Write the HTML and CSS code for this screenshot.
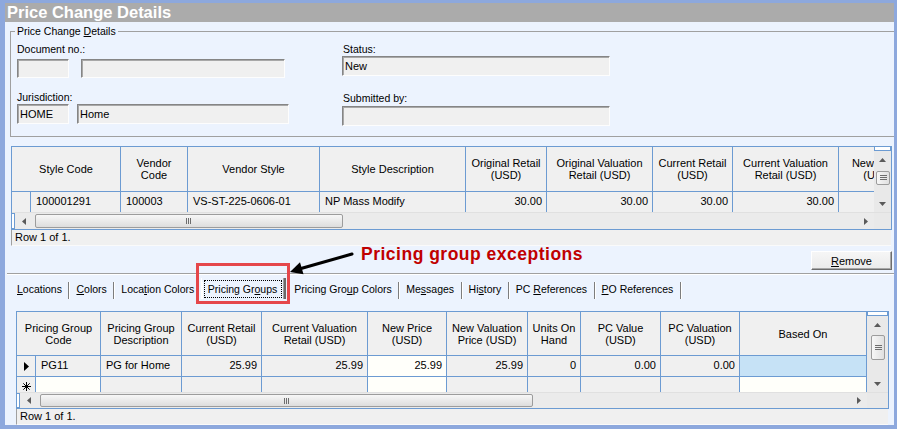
FILE: index.html
```html
<!DOCTYPE html>
<html>
<head>
<meta charset="utf-8">
<title>Price Change Details</title>
<link rel="stylesheet" href="styles.css">
</head>
<body>
<div class="window">
  <div class="titlebar">Price Change Details</div>
  <div class="panel">
    <fieldset class="group">
      <legend>Price Change <u>D</u>etails</legend>
      <div class="form">
        <div class="col-left">
          <div class="label lbl-first">Document no.:</div>
          <div class="inputs gap12 in-doc">
            <div class="field w52"></div>
            <div class="field w204"></div>
          </div>
          <div class="label lbl-jur">Jurisdiction:</div>
          <div class="inputs gap8 in-jur">
            <div class="field w52 h20">HOME</div>
            <div class="field w212 h20">Home</div>
          </div>
        </div>
        <div class="col-right">
          <div class="label lbl-first">Status:</div>
          <div class="field w267 h20">New</div>
          <div class="label lbl-sub">Submitted by:</div>
          <div class="field w267 h20 in-sub"></div>
        </div>
      </div>
    </fieldset>

    <div class="grid g1">
      <div class="grid-body">
        <div class="grid-view">
          <div class="row hdr">
            <div class="cell hcell span2">Style Code</div>
            <div class="cell hcell">Vendor Code</div>
            <div class="cell hcell">Vendor Style</div>
            <div class="cell hcell">Style Description</div>
            <div class="cell hcell">Original Retail (USD)</div>
            <div class="cell hcell">Original Valuation Retail (USD)</div>
            <div class="cell hcell">Current Retail (USD)</div>
            <div class="cell hcell">Current Valuation Retail (USD)</div>
            <div class="cell hcell">New Retail (USD)</div>
          </div>
          <div class="row data">
            <div class="cell rh"></div>
            <div class="cell">100001291</div>
            <div class="cell">100003</div>
            <div class="cell">VS-ST-225-0606-01</div>
            <div class="cell">NP Mass Modify</div>
            <div class="cell num">30.00</div>
            <div class="cell num">30.00</div>
            <div class="cell num">30.00</div>
            <div class="cell num">30.00</div>
            <div class="cell num"></div>
          </div>
        </div>
        <div class="vscroll">
          <div class="vcap"></div>
          <div class="sbtn"><svg width="7" height="4" viewBox="0 0 7 4"><path d="M0 4L3.5 0L7 4Z"/></svg></div>
          <div class="vtrack">
            <div class="vthumb"><svg width="7" height="6" viewBox="0 0 7 6"><path d="M0 0.5H7M0 2.5H7M0 4.5H7" stroke="#6d6d6d" stroke-width="1"/></svg></div>
          </div>
          <div class="sbtn"><svg width="7" height="4" viewBox="0 0 7 4"><path d="M0 0L7 0L3.5 4Z"/></svg></div>
        </div>
      </div>
      <div class="hscroll">
        <div class="hcap"></div>
        <div class="sbtn hbtn"><svg width="4" height="7" viewBox="0 0 4 7"><path d="M4 0L0 3.5L4 7Z"/></svg></div>
        <div class="htrack">
          <div class="hthumb"><svg width="6" height="6" viewBox="0 0 6 6"><path d="M0.5 0V6M2.5 0V6M4.5 0V6" stroke="#6d6d6d" stroke-width="1"/></svg></div>
        </div>
        <div class="sbtn hbtn"><svg width="4" height="7" viewBox="0 0 4 7"><path d="M0 0L4 3.5L0 7Z"/></svg></div>
        <div class="corner"></div>
      </div>
    </div>
    <div class="status s1">Row 1 of 1.</div>

    <div class="actions"><button class="btn"><u>R</u>emove</button></div>

    <div class="tabstrip">
      <div class="tab first"><u>L</u>ocations</div>
      <div class="tab"><u>C</u>olors</div>
      <div class="tab">Loca<u>t</u>ion Colors</div>
      <div class="tab active"><span class="focus">Pricing Gr<u>o</u>ups</span></div>
      <div class="tab">Pricing Gro<u>u</u>p Colors</div>
      <div class="tab">Me<u>s</u>sages</div>
      <div class="tab">Hi<u>s</u>tory</div>
      <div class="tab">PC <u>R</u>eferences</div>
      <div class="tab"><u>P</u>O References</div>
    </div>

    <div class="tabpage">
      <div class="grid g2">
        <div class="grid-body">
          <div class="grid-view">
            <div class="row hdr">
              <div class="cell hcell span2">Pricing Group Code</div>
              <div class="cell hcell">Pricing Group Description</div>
              <div class="cell hcell">Current Retail (USD)</div>
              <div class="cell hcell">Current Valuation Retail (USD)</div>
              <div class="cell hcell">New Price (USD)</div>
              <div class="cell hcell">New Valuation Price (USD)</div>
              <div class="cell hcell">Units On Hand</div>
              <div class="cell hcell">PC Value (USD)</div>
              <div class="cell hcell">PC Valuation (USD)</div>
              <div class="cell hcell">Based On</div>
            </div>
            <div class="row data">
              <div class="cell rh"><svg width="5" height="9" viewBox="0 0 5 9"><path d="M0 0L5 4.5L0 9Z"/></svg></div>
              <div class="cell">PG11</div>
              <div class="cell">PG for Home</div>
              <div class="cell num">25.99</div>
              <div class="cell num">25.99</div>
              <div class="cell num edit">25.99</div>
              <div class="cell num">25.99</div>
              <div class="cell num">0</div>
              <div class="cell num">0.00</div>
              <div class="cell num">0.00</div>
              <div class="cell sel"></div>
            </div>
            <div class="row newrow">
              <div class="cell rh star"><svg width="9" height="9" viewBox="0 0 9 9"><path d="M4.5 0V9M0 4.5H9M1.3 1.3L7.7 7.7M7.7 1.3L1.3 7.7" stroke="#000" stroke-width="1"/></svg></div>
              <div class="cell edit"></div>
              <div class="cell"></div>
              <div class="cell"></div>
              <div class="cell"></div>
              <div class="cell edit"></div>
              <div class="cell"></div>
              <div class="cell"></div>
              <div class="cell"></div>
              <div class="cell"></div>
              <div class="cell edit"></div>
            </div>
          </div>
          <div class="vscroll">
            <div class="vcap"></div>
            <div class="sbtn"><svg width="7" height="4" viewBox="0 0 7 4"><path d="M0 4L3.5 0L7 4Z"/></svg></div>
            <div class="vtrack">
              <div class="vthumb"><svg width="7" height="6" viewBox="0 0 7 6"><path d="M0 0.5H7M0 2.5H7M0 4.5H7" stroke="#6d6d6d" stroke-width="1"/></svg></div>
            </div>
            <div class="sbtn"><svg width="7" height="4" viewBox="0 0 7 4"><path d="M0 0L7 0L3.5 4Z"/></svg></div>
          </div>
        </div>
        <div class="hscroll">
          <div class="hcap"></div>
          <div class="sbtn hbtn"><svg width="4" height="7" viewBox="0 0 4 7"><path d="M4 0L0 3.5L4 7Z"/></svg></div>
          <div class="htrack">
            <div class="hthumb"><svg width="6" height="6" viewBox="0 0 6 6"><path d="M0.5 0V6M2.5 0V6M4.5 0V6" stroke="#6d6d6d" stroke-width="1"/></svg></div>
          </div>
          <div class="sbtn hbtn"><svg width="4" height="7" viewBox="0 0 4 7"><path d="M0 0L4 3.5L0 7Z"/></svg></div>
          <div class="corner"></div>
        </div>
      </div>
      <div class="status s2">Row 1 of 1.</div>
    </div>

    <div class="callout-box"></div>
    <div class="callout-text">Pricing group exceptions</div>
    <svg class="callout-arrow" width="80" height="40" viewBox="0 0 80 40">
      <path d="M67 9L16 23.5" stroke="#000" stroke-width="3" stroke-linecap="round"/>
      <path d="M5 27L15 17.3L18.5 29.2Z" fill="#000"/>
    </svg>
  </div>
</div>
</body>
</html>
```

FILE: styles.css
```css
* { box-sizing: border-box; }

body {
  margin: 0;
  background: #8da8dd;
  font-family: "Liberation Sans", Arial, sans-serif;
  font-size: 11px;
  color: #000;
}

.window {
  width: 897px;
  height: 429px;
  padding: 3px 3px 4px 5px;
  background: #8da8dd;
}

.titlebar {
  height: 19px;
  background: #ababab;
  color: #fff;
  font-weight: bold;
  font-size: 16.5px;
  line-height: 19px;
  padding-left: 2px;
  white-space: nowrap;
}

.panel {
  position: relative;
  height: 403px;
  background: #ecf3fe;
  padding-top: 2px;
}

/* group box */
.group {
  margin: 0 0 0 5px;
  padding: 0 0 10px 6px;
  border: 1px solid #a0a0a0;
  border-right: none;
  min-width: 0;
}
.group legend {
  font-size: 10.5px;
  line-height: 14px;
  padding: 0 2px;
  margin-left: -2px;
}

.form { display: flex; }
.col-left { width: 325px; }
.col-right { padding-left: 0; }

.label {
  font-size: 10.5px;
  line-height: 13px;
  height: 13px;
  white-space: nowrap;
}
.col-right .label { padding-left: 1px; }
.lbl-first { margin-top: 5px; }
.in-doc { margin-top: 3px; }
.lbl-jur { margin-top: 13px; }
.lbl-sub { margin-top: 16px; }
.in-sub { margin-top: 1px; }

.inputs { display: flex; }
.gap12 { gap: 12px; }
.gap8 { gap: 8px; }

.field {
  height: 19px;
  background: #f0f0f0;
  border: 1px solid;
  border-color: #858585 #fdfdfd #fdfdfd #858585;
  box-shadow: inset 1px 1px 0 #a8a8a8;
  font-size: 11px;
  line-height: 17px;
  padding-left: 2px;
  white-space: nowrap;
}
.h20 { height: 20px; line-height: 18px; }
.w52 { width: 52px; }
.w204 { width: 204px; }
.w212 { width: 212px; }
.w267 { width: 268px; }

/* data grids */
.grid {
  border: 1px solid #6c9bd2;
  background: #f0f0f0;
}
.g1 { margin: 9px 2px 0 6px; }

.grid-body { display: flex; }
.grid-view { flex: 1; overflow: hidden; min-width: 0; }

.row { display: grid; }
.g1 .row { grid-template-columns: 19px 90px 67px 132px 146px 81px 106px 80px 106px 80px; }
.g2 .row { grid-template-columns: 19px 65px 81px 80px 106px 79px 81px 53px 80px 79px 127px; }

.cell {
  display: flex;
  align-items: center;
  border-right: 1px solid #6c9bd2;
  border-bottom: 1px solid #6c9bd2;
  padding: 0 4px 0 5px;
  white-space: nowrap;
  overflow: hidden;
  font-size: 11px;
  background: #f0f0f0;
}
.hcell {
  justify-content: center;
  text-align: center;
  white-space: normal;
  line-height: 12px;
  padding: 0 2px;
}
.span2 { grid-column: span 2; }
.num { justify-content: flex-end; }
.rh { padding: 0; justify-content: center; }
.edit { background: #fffffa; }
.sel { background: #c6e2f6; }

.g1 .hdr { height: 45px; }
.g1 .data { height: 20px; }
.g1 .data .cell { border-bottom: none; padding-bottom: 2px; }

.g2 .hdr { height: 44px; }
.g2 .data { height: 21px; }
.g2 .data .cell { padding-bottom: 2px; }
.g2 .newrow { height: 15px; }
.g2 .newrow .cell { border-bottom: none; }
.g2 .data .rh { justify-content: flex-start; padding-left: 7px; padding-bottom: 0; }
.star { align-items: flex-end; padding-bottom: 1px; }

/* scrollbars */
.vscroll {
  width: 17px;
  background: #e9e9e9;
  display: flex;
  flex-direction: column;
}
.g2 .vscroll { width: 21px; }
.vcap {
  height: 4px;
  background: #fff;
  border: 1px solid #6c9bd2;
  border-top: none;
}
.sbtn {
  height: 17px;
  display: flex;
  align-items: center;
  justify-content: center;
  fill: #5a5a5a;
}
.sbtn svg { display: block; }
.vtrack { flex: 1; }
.vthumb {
  margin: 3px 1px 0 2px;
  height: 14px;
  border: 1px solid #9c9c9c;
  border-radius: 2px;
  background: linear-gradient(to right, #f7f7f7, #e0e0e0);
  display: flex;
  align-items: center;
  justify-content: center;
}
.g2 .vthumb { margin: 2px 3px 0 4px; height: 25px; }

.hscroll {
  height: 17px;
  display: flex;
  background: #ebebeb;
  border-top: 1px solid #e0e0e0;
}
.g2 .hscroll { height: 16px; }
.hcap {
  width: 3px;
  background: #fff;
  border: 1px solid #6c9bd2;
  border-left: none;
}
.hbtn { width: 17px; height: auto; }
.htrack { flex: 1; }
.hthumb {
  margin: 1px 0 0 3px;
  width: 308px;
  height: 14px;
  border: 1px solid #9c9c9c;
  border-radius: 2px;
  background: linear-gradient(#f7f7f7, #dddddd);
  display: flex;
  align-items: center;
  justify-content: center;
}
.g2 .hthumb { width: 493px; height: 13px; }
.corner { width: 17px; background: #e9e9e9; }
.g2 .corner { width: 21px; }

.status {
  height: 16px;
  line-height: 15px;
  padding-left: 3px;
  background: #f0f0f0;
  border-left: 1px solid #a0a0a0;
  border-bottom: 1px solid #fafafa;
  font-size: 11px;
}
.s1 { margin: 0 3px 0 6px; }
.s2 { margin: 0 1px 0 0; }

/* button */
.actions {
  display: flex;
  justify-content: flex-end;
  margin: 5px 2px 0 0;
}
.btn {
  width: 81px;
  height: 19px;
  padding: 0;
  font-family: "Liberation Sans", Arial, sans-serif;
  font-size: 11px;
  color: #000;
  background: linear-gradient(#f6f6f6, #ebebeb);
  border: 1px solid;
  border-color: #ffffff #6d6d6d #6d6d6d #ffffff;
  box-shadow: inset -1px -1px 0 #a8a8a8;
}

/* tabs */
.tabstrip {
  margin: 3px 0 0 2px;
  border-top: 1px solid #a0a0a0;
  box-shadow: inset 0 1px 0 #fff;
  height: 26px;
  display: flex;
  align-items: flex-end;
  padding-left: 6px;
}
.tab {
  height: 17px;
  line-height: 15px;
  padding: 0 6.5px 0 7px;
  font-size: 10.5px;
  white-space: nowrap;
  border-right: 1px solid #7d7d7d;
  box-shadow: 1px 0 0 #fff;
}
.tab.first { padding-left: 4px; }
.tab.active {
  height: 21px;
  margin-left: -1px;
  padding: 2px 2px 0 2px;
  border-left: 1px solid #fff;
  border-right: 2px solid #6a6a6a;
  box-shadow: inset -1px 0 0 #a0a0a0;
  line-height: 16px;
  margin-right: 1px;
}
.focus {
  display: block;
  border: 1px dotted #000;
  padding: 0 4px 0 3px;
}

.tabpage { padding: 12px 5px 0 11px; }

/* annotation */
.callout-box {
  position: absolute;
  left: 191px;
  top: 241px;
  width: 94px;
  height: 41px;
  border: 3px solid #e5474b;
}
.callout-text {
  position: absolute;
  left: 356px;
  top: 222px;
  font-size: 17.5px;
  line-height: 20px;
  font-weight: bold;
  letter-spacing: 0.5px;
  color: #c00000;
  white-space: nowrap;
}
.callout-arrow {
  position: absolute;
  left: 280px;
  top: 223px;
}
```
